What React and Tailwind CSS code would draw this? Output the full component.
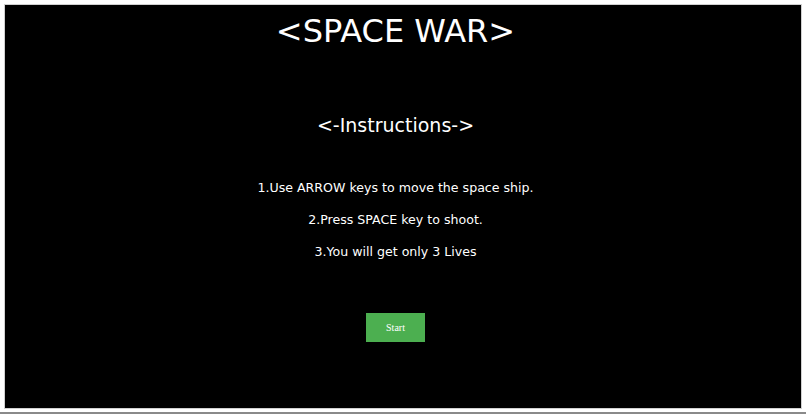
export default function App() {
  return (
    <div className="w-[806px] h-[414px] bg-white overflow-hidden flex flex-col">
      <div className="mx-[4px] mt-[4px] h-[405px] bg-black border border-[#d0d0d0] pr-[15px] flex flex-col items-center text-white font-['DejaVu_Sans',sans-serif]">
        <h1 className="mt-[8px] text-[32px] leading-[36px]">&lt;SPACE WAR&gt;</h1>
        <h2 className="mt-[63px] text-[19px] leading-[26px]">&lt;-Instructions-&gt;</h2>
        <div className="mt-[41px] flex flex-col items-center gap-[14px] text-[12.6px] leading-[18px]">
          <p>1.Use ARROW keys to move the space ship.</p>
          <p>2.Press SPACE key to shoot.</p>
          <p>3.You will get only 3 Lives</p>
        </div>
        <button className="mt-[52px] w-[59px] h-[29px] bg-[#4caf50] text-white text-[10px] font-['Liberation_Serif',serif]">
          Start
        </button>
      </div>
      <div className="mt-auto h-[2px] bg-[#8a8a8a]"></div>
    </div>
  );
}
